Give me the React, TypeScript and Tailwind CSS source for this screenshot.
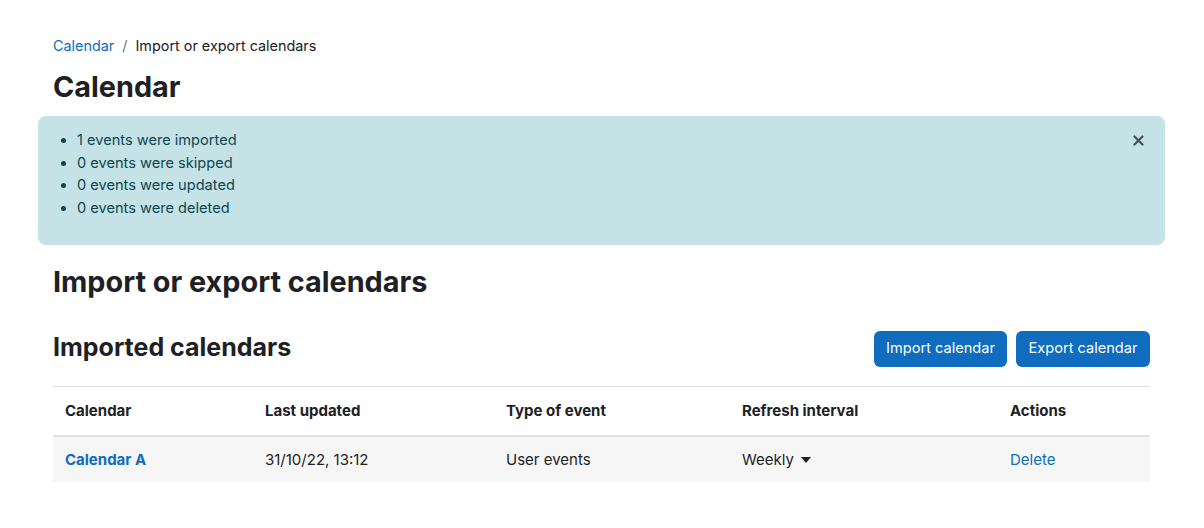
export default function App() {
  const font = { fontFamily: 'Inter, "Noto Sans", sans-serif' };
  return (
    <div className="w-[1204px] h-[528px] bg-white text-[#1d2125] overflow-hidden" style={font}>
      <div className="pl-[53px] pr-[54px] pt-[35px]">
        <nav className="flex items-center text-[14.4px] leading-[21px]">
          <a className="text-[#0f6cbf]">Calendar</a>
          <span className="px-[8px] text-[#6a737b]">/</span>
          <span>Import or export calendars</span>
        </nav>
        <h1 className="mt-[14px] text-[28.8px] leading-[34px] font-bold">Calendar</h1>
        <div className="relative -mx-[15px] mt-[12px] h-[129px] rounded-[8px] bg-[#c5e2e6] text-[#0f4550] pt-[13px] pl-[24px]">
          <ul className="list-disc pl-[15px] text-[14.6px] leading-[22.5px] marker:text-[#0f4550]">
            <li>1 events were imported</li>
            <li>0 events were skipped</li>
            <li>0 events were updated</li>
            <li>0 events were deleted</li>
          </ul>
          <button className="absolute right-[21px] top-[18px] w-[12px] h-[12px] flex items-center justify-center">
            <svg width="11" height="11" viewBox="0 0 11 11">
              <path d="M1.5 1.5 L9.5 9.5 M9.5 1.5 L1.5 9.5" stroke="#495057" strokeWidth="2.2" strokeLinecap="round" />
            </svg>
          </button>
        </div>
        <h2 className="mt-[20px] text-[28.8px] leading-[34px] font-bold">Import or export calendars</h2>
        <div className="mt-[32px] flex items-center justify-between h-[36px]">
          <h3 className="text-[25px] leading-[29px] font-bold -mt-[3px]">Imported calendars</h3>
          <div className="flex gap-[9px]">
            <button className="h-[36px] w-[133px] rounded-[6px] bg-[#0f6cbf] text-white text-[14.6px]">Import calendar</button>
            <button className="h-[36px] w-[134px] rounded-[6px] bg-[#0f6cbf] text-white text-[14.6px]">Export calendar</button>
          </div>
        </div>
        <table className="mt-[19px] w-full border-collapse text-[15px] leading-[22.5px]">
          <thead>
            <tr className="h-[49px] border-t border-[#dee2e6] border-b-2 border-b-[#dee2e6]">
              <th className="w-[200px] px-[12px] text-left font-bold">Calendar</th>
              <th className="w-[241px] px-[12px] text-left font-bold">Last updated</th>
              <th className="w-[236px] px-[12px] text-left font-bold">Type of event</th>
              <th className="w-[268px] px-[12px] text-left font-bold">Refresh interval</th>
              <th className="px-[12px] text-left font-bold">Actions</th>
            </tr>
          </thead>
          <tbody>
            <tr className="h-[46px] bg-[#f6f6f6]">
              <td className="px-[12px] pt-[2px] font-bold text-[#0f6cbf]">Calendar A</td>
              <td className="px-[12px] pt-[2px]">31/10/22, 13:12</td>
              <td className="px-[12px] pt-[2px]">User events</td>
              <td className="px-[12px] pt-[2px]">
                <span className="inline-flex items-center gap-[7px]">
                  Weekly
                  <svg width="10" height="6" viewBox="0 0 10 6"><path d="M0 0 L10 0 L5 6 Z" fill="#1d2125" /></svg>
                </span>
              </td>
              <td className="px-[12px] pt-[2px] text-[#0f6cbf]">Delete</td>
            </tr>
          </tbody>
        </table>
      </div>
    </div>
  );
}
